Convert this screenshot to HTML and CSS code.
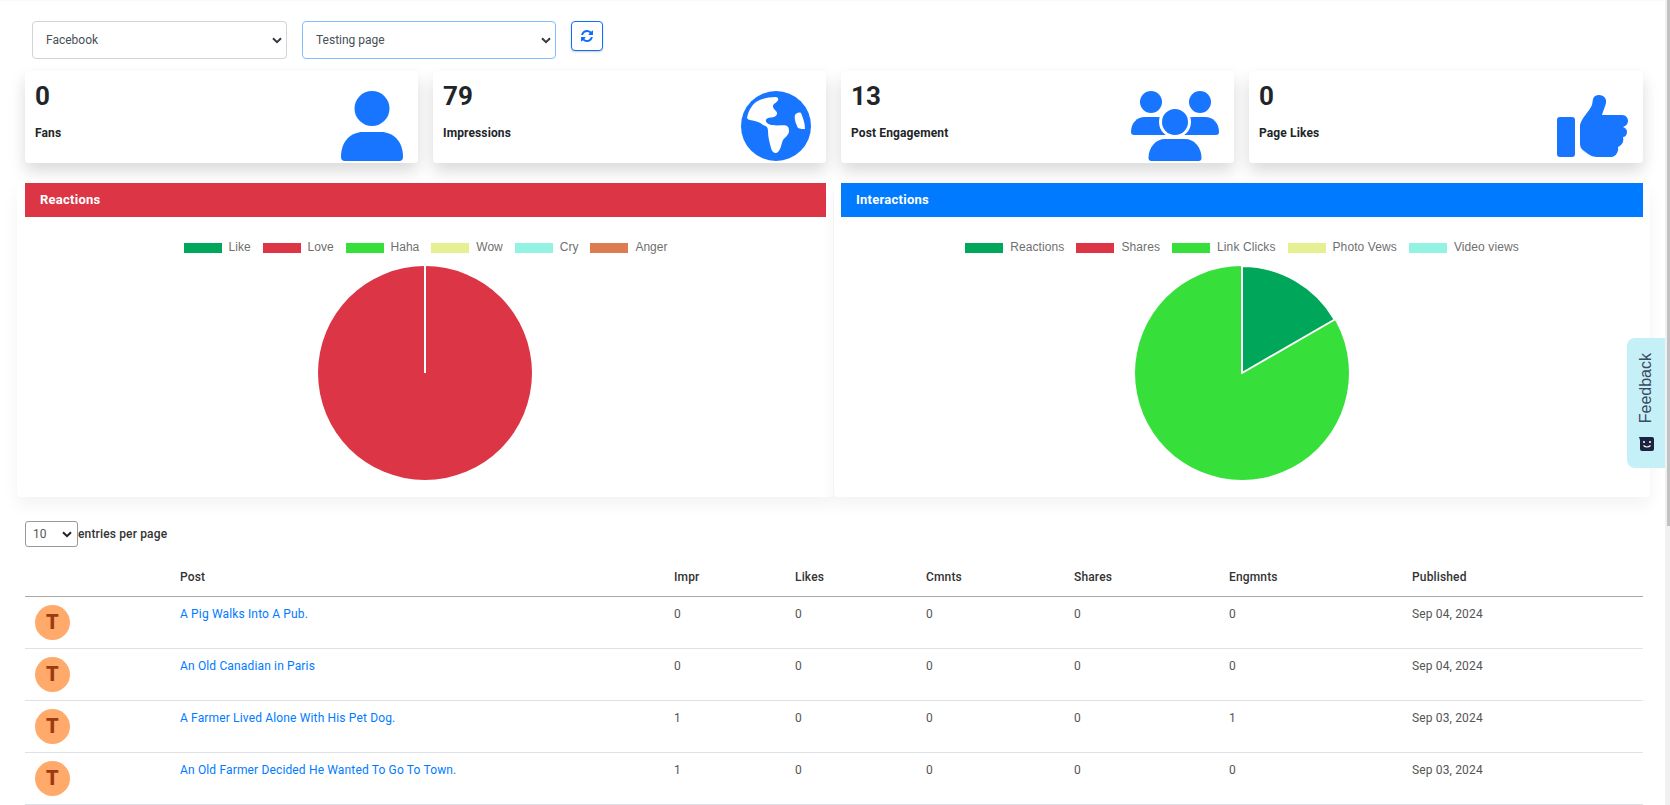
FILE: index.html
```html
<!DOCTYPE html>
<html lang="en">
<head>
  <meta charset="UTF-8" />
  <meta name="viewport" content="width=device-width, initial-scale=1.0" />
  <title>Facebook Analytics</title>
  <link rel="stylesheet" href="styles.css">
</head>
<body>
  <div class="page">

    <div class="toolbar">
      <select class="picker">
        <option>Facebook</option>
      </select>
      <select class="picker picker-active">
        <option>Testing page</option>
      </select>
      <button class="refresh-btn" type="button" aria-label="Refresh">
        <svg viewBox="0 0 1536 1536" width="12" height="12"><path fill="#0d6efd" d="M1511 928q0 5-1 7-64 268-268 434.5t-478 166.5q-146 0-282.5-55t-243.5-157l-129 129q-19 19-45 19t-45-19-19-45v-448q0-26 19-45t45-19h448q26 0 45 19t19 45-19 45l-137 137q71 66 161 102t187 36q134 0 250-65t186-179q11-17 53-117 8-23 30-23h192q13 0 22.5 9.5t9.5 22.5zm25-800v448q0 26-19 45t-45 19h-448q-26 0-45-19t-19-45 19-45l138-138q-148-137-349-137-134 0-250 65t-186 179q-11 17-53 117-8 23-30 23h-199q-13 0-22.5-9.5t-9.5-22.5v-7q65-268 270-434.5t480-166.5q146 0 284 55.5t245 156.5l130-129q19-19 45-19t45 19 19 45z"/></svg>
      </button>
    </div>

    <div class="stats">
      <div class="stat-card">
        <div>
          <div class="stat-number">0</div>
          <div class="stat-label">Fans</div>
        </div>
        <svg class="stat-icon" viewBox="0 0 62 70" width="62" height="70">
          <circle cx="31" cy="17.5" r="17.5"/>
          <path d="M0 66C0 50 10 41 22 41H40C52 41 62 50 62 66Q62 70 58 70H4Q0 70 0 66Z"/>
        </svg>
      </div>
      <div class="stat-card">
        <div>
          <div class="stat-number">79</div>
          <div class="stat-label">Impressions</div>
        </div>
        <svg class="stat-icon" viewBox="0 0 70 70" width="70" height="70">
          <circle cx="35" cy="35" r="35"/>
          <path fill="#fff" d="M35 6C27 6 20 8 15 11C10 15 7 21 6 27Q7 29 9 29C14 30 19 31 22 34C26 35 27 37 27 40C27 45 28 50 30 57C31 62 35 63 37 61C40 58 40 54 42 49C44 46 48 44 48 40C48 37 47 35 45 34.500C40 34 36 35 32 34C28 34 24 31 25 29C26 26 30 27 33 26C36 25 37 22 35 20C32 17 31 15 33 13C35 11 38 10 37 7Z"/>
          <path fill="#fff" d="M54 24C55 22 58 21 60 22C62 27 64 32 64 38C62 38 59 38 57 37C55 33 53 28 54 24Z"/>
        </svg>
      </div>
      <div class="stat-card">
        <div>
          <div class="stat-number">13</div>
          <div class="stat-label">Post Engagement</div>
        </div>
        <svg class="stat-icon" viewBox="0 0 88 70" width="88" height="70">
          <circle cx="20" cy="11" r="11"/>
          <circle cx="69" cy="11" r="11"/>
          <path d="M0 41C0 32 6 26 14 26H26C34 26 40 32 40 41Q40 44 37 44H3Q0 44 0 41Z"/>
          <path d="M48 41C48 32 54 26 62 26H74C82 26 88 32 88 41Q88 44 85 44H51Q48 44 48 41Z"/>
          <circle cx="44" cy="31" r="14.500" stroke="#fff" stroke-width="3"/>
          <path d="M17.500 67C17.500 56 25 48 34 48H54C63 48 70.500 56 70.500 67Q70.500 70 67.500 70H20.500Q17.500 70 17.500 67Z"/>
        </svg>
      </div>
      <div class="stat-card">
        <div>
          <div class="stat-number">0</div>
          <div class="stat-label">Page Likes</div>
        </div>
        <svg class="stat-icon stat-icon-low" viewBox="0 0 71 62" width="71" height="62">
          <rect x="0" y="22" width="18" height="40" rx="3"/>
          <path d="M23 30C25 22 32 17 35 10L36 4C37 1 39 0 42 0C47 0 50 4 49 8C48 12 46 16 45 20H65C69 20 71 23 71 26C71 29 69 31 66 32C69 33 70 35 70 37C70 40 68 42 66 42C67 45 66 50 61 52C62 56 59 62 54 62H40C35 62 31 59 27 56C24 54 23 52 23 48Z"/>
        </svg>
      </div>
    </div>

    <div class="charts">
      <div class="panel">
        <div class="panel-title title-red">Reactions</div>
        <div class="panel-body">
          <div class="legend">
            <span class="legend-item"><i class="swatch c-like"></i>Like</span>
            <span class="legend-item"><i class="swatch c-love"></i>Love</span>
            <span class="legend-item"><i class="swatch c-haha"></i>Haha</span>
            <span class="legend-item"><i class="swatch c-wow"></i>Wow</span>
            <span class="legend-item"><i class="swatch c-cry"></i>Cry</span>
            <span class="legend-item"><i class="swatch c-anger"></i>Anger</span>
          </div>
          <svg class="pie pie-left" viewBox="0 0 216 216" width="216" height="216">
            <circle cx="108" cy="108" r="107" fill="#dc3545"/>
            <line x1="108" y1="0" x2="108" y2="108" stroke="#fff" stroke-width="2"/>
          </svg>
        </div>
      </div>
      <div class="panel panel-right">
        <div class="panel-title title-blue">Interactions</div>
        <div class="panel-body">
          <div class="legend legend-wide">
            <span class="legend-item"><i class="swatch c-like"></i>Reactions</span>
            <span class="legend-item"><i class="swatch c-love"></i>Shares</span>
            <span class="legend-item"><i class="swatch c-haha"></i>Link Clicks</span>
            <span class="legend-item"><i class="swatch c-wow"></i>Photo Vews</span>
            <span class="legend-item"><i class="swatch c-cry"></i>Video views</span>
          </div>
          <svg class="pie" viewBox="0 0 216 216" width="216" height="216">
            <circle cx="108" cy="108" r="107" fill="#37df3b"/>
            <path d="M108 108V1A107 107 0 0 1 200.700 54.500Z" fill="#00a65a" stroke="#fff" stroke-width="2" stroke-linejoin="round"/>
          </svg>
        </div>
      </div>
    </div>

    <div class="entries">
      <select class="entries-select">
        <option>10</option>
      </select>
      <span>entries per page</span>
    </div>

    <table class="posts">
      <colgroup>
        <col class="col-avatar"><col class="col-post"><col class="col-impr"><col class="col-likes">
        <col class="col-cmnts"><col class="col-shares"><col class="col-eng"><col class="col-date">
      </colgroup>
      <thead>
        <tr>
          <th></th><th>Post</th><th>Impr</th><th>Likes</th><th>Cmnts</th><th>Shares</th><th>Engmnts</th><th>Published</th>
        </tr>
      </thead>
      <tbody>
        <tr>
          <td><span class="avatar">T</span></td>
          <td><a href="#">A Pig Walks Into A Pub.</a></td>
          <td>0</td><td>0</td><td>0</td><td>0</td><td>0</td><td>Sep 04, 2024</td>
        </tr>
        <tr>
          <td><span class="avatar">T</span></td>
          <td><a href="#">An Old Canadian in Paris</a></td>
          <td>0</td><td>0</td><td>0</td><td>0</td><td>0</td><td>Sep 04, 2024</td>
        </tr>
        <tr>
          <td><span class="avatar">T</span></td>
          <td><a href="#">A Farmer Lived Alone With His Pet Dog.</a></td>
          <td>1</td><td>0</td><td>0</td><td>0</td><td>1</td><td>Sep 03, 2024</td>
        </tr>
        <tr>
          <td><span class="avatar">T</span></td>
          <td><a href="#">An Old Farmer Decided He Wanted To Go To Town.</a></td>
          <td>1</td><td>0</td><td>0</td><td>0</td><td>0</td><td>Sep 03, 2024</td>
        </tr>
      </tbody>
    </table>
  </div>

  <div class="feedback">
    <span class="feedback-text">Feedback</span>
    <svg viewBox="0 0 15 14" width="15" height="14">
      <path fill="#1c2340" d="M0 0H13Q15 0 15 2V12Q15 14 13 14H3Q1 14 1 12V3Z"/>
      <circle cx="5" cy="5" r="1" fill="#fff"/>
      <circle cx="11" cy="5" r="1" fill="#fff"/>
      <path d="M4.500 8.500Q8 11.500 11.500 8.500" fill="none" stroke="#fff" stroke-width="1.200"/>
    </svg>
  </div>

  <div class="scrollbar">
    <div class="scrollbar-thumb"></div>
  </div>
</body>
</html>
```

FILE: styles.css
```css
html, body {
  margin: 0;
  height: 805px;
  overflow: hidden;
  background: #fff;
}
body {
  font-family: Roboto, sans-serif;
  font-size: 12px;
  color: #555;
}
.page {
  width: 1665px;
  box-sizing: border-box;
  padding: 20px 22px 0 25px;
  border-top: 1px solid #f9f9f9;
}

/* top selects */
.toolbar {
  display: flex;
  align-items: flex-start;
  padding-left: 7px;
}
.picker {
  appearance: none;
  width: 255px;
  height: 38px;
  margin-right: 15px;
  padding: 0 13px;
  font-family: Roboto, sans-serif;
  font-size: 12px;
  color: #495057;
  background: #fff url("data:image/svg+xml,%3Csvg xmlns='http://www.w3.org/2000/svg' viewBox='0 0 10 7'%3E%3Cpath d='M1 1.200l4 4 4-4' fill='none' stroke='%23343a40' stroke-width='2'/%3E%3C/svg%3E") no-repeat right 4px center / 10px 7px;
  border: 1px solid #ced4da;
  border-radius: 4px;
}
.picker-active {
  width: 254px;
  border-color: #80bdff;
}
.refresh-btn {
  display: flex;
  align-items: center;
  justify-content: center;
  width: 32px;
  height: 30px;
  padding: 0;
  background: #fff;
  border: 1px solid #0d6efd;
  border-radius: 4px;
  box-shadow: 0 1px 2px rgba(0,0,0,0.2);
}

/* stat cards */
.stats {
  display: grid;
  grid-template-columns: 393px 393px 393px 394px;
  column-gap: 15px;
  margin-top: 12px;
}
.stat-card {
  display: flex;
  justify-content: space-between;
  align-items: flex-start;
  height: 92px;
  box-sizing: border-box;
  padding: 0 15px 0 10px;
  background: #fff;
  border-radius: 4px;
  box-shadow: 0 8px 16px rgba(0,0,0,0.15);
}
.stat-number {
  margin-top: 10px;
  font-size: 26px;
  line-height: 31px;
  font-weight: 700;
  color: #212529;
}
.stat-label {
  margin-top: 13px;
  font-size: 12px;
  line-height: 16px;
  font-weight: 700;
  letter-spacing: 0.13px;
  color: #212529;
}
.stat-icon {
  margin-top: 20px;
  fill: #1775ff;
}
.stat-icon-low {
  margin-top: 24px;
}

/* chart panels */
.charts {
  display: grid;
  grid-template-columns: 816px 816px;
  column-gap: 1px;
  margin: 20px -7px 0 -8px;
}
.panel {
  padding: 0 7px 0 8px;
  background: #fff;
  border-radius: 4px;
  box-shadow: 0 8px 16px rgba(0,0,0,0.05);
}
.panel-right {
  padding-left: 7px;
}
.panel-title {
  height: 34px;
  padding-left: 15px;
  font-size: 13px;
  line-height: 34px;
  font-weight: 700;
  letter-spacing: 0.25px;
  color: #fff;
}
.title-red { background: #dc3545; }
.title-blue { background: #007bff; }
.panel-body {
  display: flex;
  flex-direction: column;
  align-items: center;
  padding: 23px 0 16px;
}
.legend {
  display: flex;
  justify-content: center;
  gap: 12px;
  font-family: "Liberation Sans", Arial, sans-serif;
  font-size: 12px;
  line-height: 14px;
  color: #6f6f6f;
}
.legend-wide {
  letter-spacing: 0.1px;
}
.legend-item {
  display: flex;
  align-items: center;
}
.swatch {
  width: 38px;
  height: 10px;
  margin: 2px 7px 0 0;
}
.c-like { background: #00a65a; }
.c-love { background: #dc3545; }
.c-haha { background: #37df3b; }
.c-wow { background: #e6ef92; }
.c-cry { background: #93f2e2; }
.c-anger { background: #dd7c51; }
.pie {
  display: block;
  margin-top: 11px;
}
.pie-left {
  margin-right: 1px;
}

/* posts table */
.entries {
  display: flex;
  align-items: center;
  margin-top: 24px;
  font-weight: 500;
  letter-spacing: 0.15px;
  color: #333;
}
.entries-select {
  appearance: none;
  width: 53px;
  height: 26px;
  padding: 0 7px;
  font-family: Roboto, sans-serif;
  font-size: 12px;
  color: #555;
  background: #fff url("data:image/svg+xml,%3Csvg xmlns='http://www.w3.org/2000/svg' viewBox='0 0 10 7'%3E%3Cpath d='M1 1.200l4 4 4-4' fill='none' stroke='%23222' stroke-width='2'/%3E%3C/svg%3E") no-repeat right 5px center / 10px 7px;
  border: 1px solid #999;
  border-radius: 3px;
}
.posts {
  width: 1618px;
  margin-top: 11px;
  table-layout: fixed;
  border-collapse: separate;
  border-spacing: 0;
  letter-spacing: 0.15px;
}
.col-avatar { width: 145px; }
.col-post { width: 494px; }
.col-impr { width: 121px; }
.col-likes { width: 131px; }
.col-cmnts { width: 148px; }
.col-shares { width: 155px; }
.col-eng { width: 183px; }
.col-date { width: 241px; }
.posts th {
  padding: 11px 10px;
  line-height: 16px;
  font-weight: 500;
  text-align: left;
  color: #333;
  border-bottom: 1px solid #aaa;
}
.posts td {
  height: 35px;
  padding: 8px 10px;
  line-height: 18px;
  vertical-align: top;
  border-bottom: 1px solid #dee2e6;
}
.posts a {
  color: #007bff;
  text-decoration: none;
}
.avatar {
  display: block;
  width: 35px;
  height: 35px;
  border-radius: 50%;
  background: #ffa96b;
  color: #9c3a12;
  font-size: 20px;
  font-weight: 900;
  line-height: 35px;
  text-align: center;
}

/* floating bits */
.feedback {
  position: fixed;
  top: 338px;
  right: 5px;
  display: flex;
  flex-direction: column;
  align-items: center;
  width: 38px;
  height: 130px;
  box-sizing: border-box;
  padding-top: 15px;
  background: #c6f0f7;
  border-radius: 8px 0 0 8px;
}
.feedback-text {
  writing-mode: vertical-rl;
  transform: rotate(180deg);
  font-family: "Liberation Sans", Arial, sans-serif;
  font-size: 16px;
  line-height: 16px;
  color: #3a4a63;
  margin-bottom: 14px;
}
.scrollbar {
  position: fixed;
  top: 0;
  right: 0;
  width: 5px;
  height: 805px;
  background: #f1f1f1;
}
.scrollbar-thumb {
  width: 3px;
  height: 526px;
  margin-left: 2px;
  background: #c1c1c1;
}
```
